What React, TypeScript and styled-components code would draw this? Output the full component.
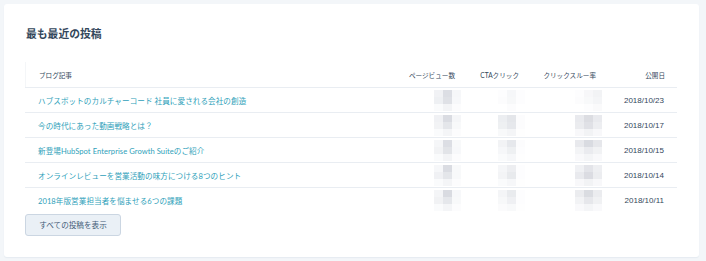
import styled, { createGlobalStyle } from "styled-components";

const GlobalStyle = createGlobalStyle`
  body {
    margin: 0;
    background: #f3f6f9;
    font-family: Lato, "Noto Sans CJK JP", sans-serif;
    color: #33475b;
  }
`

const Page = styled.div`
  padding: 4px 7px 4px 4px;
  height: 261px;
  box-sizing: border-box;
`

const Card = styled.section`
  background: #fff;
  border-radius: 3px;
  box-shadow: 0 1px 1px rgba(203, 214, 226, 0.35);
  padding: 22px 22px 21px 21px;
  height: 253px;
  box-sizing: border-box;
`

const Title = styled.h2`
  margin: 0 0 20px 1px;
  font-size: 10.8px;
  font-weight: 700;
  line-height: 16px;
  color: #33475b;
`

const Table = styled.div`
  width: 652px;
`

const Row = styled.div<{ $head?: boolean }>`
  display: grid;
  grid-template-columns: 362px 80px 64px 77px 69px;
  height: 25px;
  align-items: center;
  border-top: ${props => props.$head ? "none" : "1px solid #e9edf2"};
  box-sizing: border-box;
  ${props => props.$head && "border-left: 1px solid #f4f6f8;"}
`

const HeadCell = styled.div<{ $left?: boolean }>`
  font-size: 6.6px;
  color: #33475b;
  text-align: ${props => props.$left ? "left" : "right"};
  padding: ${props => props.$left ? "0 0 0 13px" : "0 13px 0 0"};
  white-space: nowrap;
`

const PostLink = styled.a`
  font-size: 7.6px;
  color: #2f9fba;
  text-decoration: none;
  padding-left: 13px;
  white-space: nowrap;
  letter-spacing: 0.05px;
`

const NumCell = styled.div`
  display: flex;
  justify-content: flex-end;
  padding-right: 6px;
  align-self: stretch;
  align-items: center;
`

const DateCell = styled.div`
  font-size: 8px;
  font-family: "Liberation Sans", Arial, sans-serif;
  color: #33475b;
  text-align: right;
  padding-right: 13px;
`

const Mosaic = styled.div<{ $cols: number }>`
  display: grid;
  grid-template-columns: repeat(${props => props.$cols}, 9px);
  grid-auto-rows: 7px;
  filter: blur(0.5px);
`

const Pixel = styled.span<{ $c: string }>`
  background: ${props => props.$c};
`

const Button = styled.button`
  margin-top: 0;
  width: 96px;
  height: 22px;
  background: #eaf0f6;
  border: 1px solid #cbd6e2;
  border-radius: 3px;
  font-family: Lato, "Noto Sans CJK JP", sans-serif;
  font-size: 7.6px;
  color: #425b76;
  padding: 0;
`

interface IPost {
  title: string;
  date: string;
  pv: string[];
  cta: string[];
  ctr: string[];
}

// obscured metrics, drawn as 3-wide blocks of grey cells
const posts: IPost[] = [
  {
    title: "ハブスポットのカルチャーコード 社員に愛される会社の創造",
    date: "2018/10/23",
    pv: ["#f1f2f5", "#dcdee4", "#f6f7f9", "#eef0f3", "#dfe1e6", "#f7f8fa", "#fafbfc", "#f3f4f6", "#fcfcfd"],
    cta: ["#fdfdfe", "#f6f7f9", "#fdfdfe", "#fcfcfd", "#f7f8f9", "#fdfdfe", "#ffffff", "#fcfcfd", "#ffffff"],
    ctr: ["#fdfdfe", "#f7f7f9", "#f2f3f5", "#fcfcfd", "#f8f9fa", "#f4f5f7", "#ffffff", "#fdfdfe", "#fafafb"],
  },
  {
    title: "今の時代にあった動画戦略とは？",
    date: "2018/10/17",
    pv: ["#f0f1f4", "#dadce2", "#f5f6f8", "#f2f3f5", "#e4e6ea", "#f8f9fa", "#fafbfc", "#f4f5f7", "#fcfcfd"],
    cta: ["#eceef1", "#e4e6ea", "#fcfcfd", "#eef0f2", "#e6e8ec", "#fcfcfd", "#f8f9fa", "#f4f5f7", "#fefefe"],
    ctr: ["#e9eaee", "#dcdde2", "#e9eaee", "#ebecef", "#e0e1e6", "#edeef1", "#f8f8fa", "#f2f3f5", "#f8f8fa"],
  },
  {
    title: "新登場HubSpot Enterprise Growth Suiteのご紹介",
    date: "2018/10/15",
    pv: ["#f5f6f8", "#dcdee4", "#f8f9fa", "#f2f3f5", "#e2e4e8", "#f7f8fa", "#fafbfc", "#f3f4f6", "#fcfcfd"],
    cta: ["#f2f3f5", "#e6e8ec", "#fcfcfd", "#f6f7f9", "#eef0f2", "#fdfdfe", "#fafbfc", "#f6f7f9", "#fefefe"],
    ctr: ["#e8e9ed", "#d9dbe1", "#e6e7eb", "#f3f4f6", "#eaebef", "#f1f2f4", "#f9f9fb", "#f4f5f7", "#f9f9fb"],
  },
  {
    title: "オンラインレビューを営業活動の味方につける8つのヒント",
    date: "2018/10/14",
    pv: ["#f6f7f9", "#dadce2", "#f8f9fa", "#f0f1f4", "#e4e6ea", "#f8f9fa", "#fafbfc", "#f4f5f7", "#fcfcfd"],
    cta: ["#f5f6f8", "#edeef1", "#fdfdfe", "#f3f4f6", "#e8eaed", "#fdfdfe", "#fafbfc", "#f6f7f9", "#fefefe"],
    ctr: ["#f0f1f4", "#e3e4e9", "#eeeff2", "#e9eaee", "#dbdce2", "#ecedf0", "#f8f8fa", "#f2f3f5", "#f8f8fa"],
  },
  {
    title: "2018年版営業担当者を悩ませる6つの課題",
    date: "2018/10/11",
    pv: ["#f4f5f7", "#d9dbe1", "#f7f8fa", "#f1f2f4", "#e5e7eb", "#f8f9fa", "#fafbfc", "#f4f5f7", "#fcfcfd"],
    cta: ["#f4f5f7", "#e9ebee", "#fdfdfe", "#f7f8f9", "#eff0f3", "#fdfdfe", "#fbfbfc", "#f8f9fa", "#fefefe"],
    ctr: ["#ebecef", "#dadce1", "#ebecef", "#f2f3f5", "#e6e7eb", "#f0f1f3", "#f9f9fb", "#f4f5f7", "#f9f9fb"],
  },
]

function Blocks({ shades }: { shades: string[] }) {
  return (
    <Mosaic $cols={3}>
      {shades.map((c, i) => <Pixel key={i} $c={c} />)}
    </Mosaic>
  )
}

function App() {
  return (
    <Page>
      <GlobalStyle />
      <Card>
        <Title>最も最近の投稿</Title>
        <Table>
          <Row $head>
            <HeadCell $left>ブログ記事</HeadCell>
            <HeadCell>ページビュー数</HeadCell>
            <HeadCell>CTAクリック</HeadCell>
            <HeadCell>クリックスルー率</HeadCell>
            <HeadCell>公開日</HeadCell>
          </Row>
          {posts.map(post => (
            <Row key={post.date}>
              <PostLink href="#">{post.title}</PostLink>
              <NumCell><Blocks shades={post.pv} /></NumCell>
              <NumCell><Blocks shades={post.cta} /></NumCell>
              <NumCell><Blocks shades={post.ctr} /></NumCell>
              <DateCell>{post.date}</DateCell>
            </Row>
          ))}
        </Table>
        <Button>すべての投稿を表示</Button>
      </Card>
    </Page>
  )
}

export default App
